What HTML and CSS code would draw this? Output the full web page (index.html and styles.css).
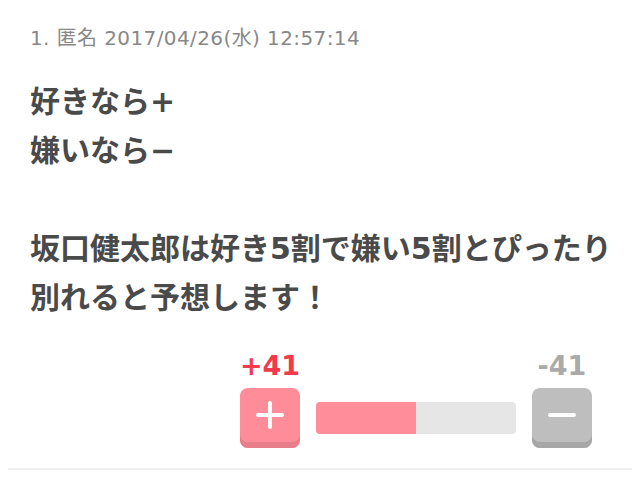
FILE: index.html
```html
<html>
<head>
<meta charset="utf-8">
<title>コメント</title>
<link rel="stylesheet" href="styles.css">
</head>
<body>
<div class="comment">
	<div class="commentHead">1. 匿名 2017/04/26(水) 12:57:14</div>
	<div class="commentBody">
		好きなら+<br/>
		嫌いなら−<br/>
		<br/>
		坂口健太郎は好き5割で嫌い5割とぴったり<br/>
		別れると予想します！
	</div>

	<div class="vote">
		<div class="voteCol">
			<div class="count plusCount">+41</div>
			<button type="button" class="voteBtn plusBtn"><span class="bar h"></span><span class="bar v"></span></button>
		</div>
		<div class="meter"><div class="meterFill" style="width: 50%;"></div></div>
		<div class="voteCol">
			<div class="count minusCount">-41</div>
			<button type="button" class="voteBtn minusBtn"><span class="bar h"></span></button>
		</div>
	</div>
</div>
</body>
</html>
```

FILE: styles.css
```css
body {margin: 8px; background: #fff; font-family: "DejaVu Sans", "Noto Sans CJK JP", sans-serif;}

.comment {padding: 15px 40px 0 22px; border-bottom: 2px solid #f0f0f0; padding-bottom: 20px;}

.commentHead {font-size: 20px; line-height: 30px; color: #888; letter-spacing: 0.4px;}

/* Body text */
.commentBody {margin-top: 24px; font-size: 30px; line-height: 49px; font-weight: bold; color: #4a4a4a; white-space: nowrap;}

/* Vote area */
.vote {display: flex; justify-content: flex-end; align-items: flex-end; margin-top: 30px;}
.voteCol {display: flex; flex-direction: column; align-items: center; width: 60px;}
.count {font-size: 27px; line-height: 28px; font-weight: bold; margin-bottom: 8px;}
.plusCount {color: #f23a4b;}
.minusCount {color: #aaa;}

.voteBtn {position: relative; width: 60px; height: 60px; border: 0; padding: 0; border-radius: 8px; cursor: pointer;}
.plusBtn {background: #ff8d99; box-shadow: inset 0 -6px 0 #e97e8b;}
.minusBtn {background: #bebebe; box-shadow: inset 0 -6px 0 #a7a7a7;}

.voteBtn .bar {position: absolute; background: #fff; border-radius: 2px;}
.voteBtn .h {width: 28px; height: 4px; left: 16px; top: 25px;}
.voteBtn .v {width: 4px; height: 28px; left: 28px; top: 13px;}

.meter {width: 200px; height: 32px; margin: 0 16px 14px 16px; background: #e6e6e6; border-radius: 4px; overflow: hidden;}
.meterFill {height: 100%; background: #ff8e9a;}
```
